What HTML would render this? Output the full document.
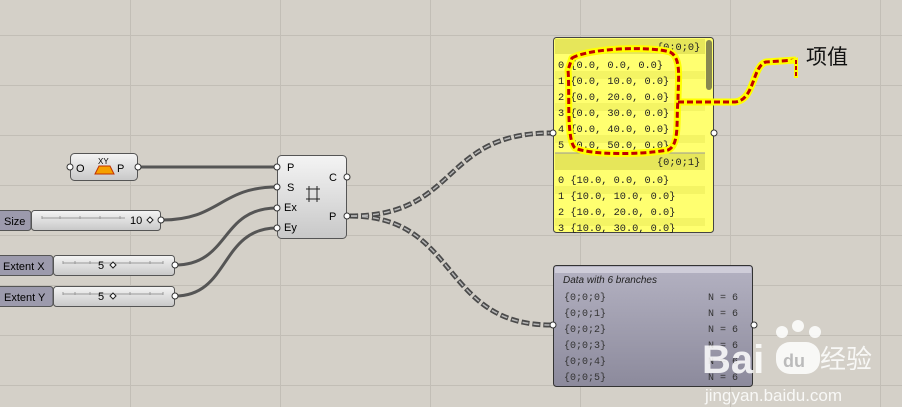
<!DOCTYPE html>
<html><head><meta charset="utf-8"><style>
body{margin:0;width:902px;height:407px;overflow:hidden;background:#d4d0c8;font-family:"Liberation Sans",sans-serif}
svg{position:absolute;left:0;top:0}
.m{font-family:"Liberation Mono",monospace}
</style></head><body>
<svg width="902" height="407" viewBox="0 0 902 407">
<defs>
<linearGradient id="gb" x1="0" y1="0" x2="0" y2="1"><stop offset="0" stop-color="#f4f4f4"/><stop offset="1" stop-color="#c8c8c8"/></linearGradient>
<linearGradient id="pu" x1="0" y1="0" x2="0" y2="1"><stop offset="0" stop-color="#b4b2c2"/><stop offset="1" stop-color="#8c8a9c"/></linearGradient>
</defs>
<g stroke="#c2beb6" stroke-width="1">
<path d="M130.5 0V407M280.5 0V407M430.5 0V407M580.5 0V407M730.5 0V407M880.5 0V407"/>
<path d="M0 35.5H902M0 85.5H902M0 135.5H902M0 185.5H902M0 235.5H902M0 285.5H902M0 335.5H902M0 385.5H902"/>
</g>
<g fill="none" stroke="#555" stroke-width="3">
<path d="M138 167H277"/>
<path d="M162 220C220 220 220 187 277 187"/>
<path d="M175 265C230 265 220 208 277 208"/>
<path d="M175 296C230 296 220 228 277 228"/>
</g>
<g fill="none" stroke="#4a4a4a" stroke-width="5" stroke-dasharray="8 3">
<path d="M350 216C460 216 440 133 551 133"/>
<path d="M350 216C460 216 440 325 551 325"/>
</g>
<g fill="none" stroke="#b8b8b8" stroke-width="1.5" stroke-dasharray="6 5" stroke-dashoffset="-1">
<path d="M350 216C460 216 440 133 551 133"/>
<path d="M350 216C460 216 440 325 551 325"/>
</g>
<rect x="70.5" y="153.5" width="67" height="27" rx="4" fill="url(#gb)" stroke="#555"/>
<text x="76" y="172" font-size="11">O</text>
<text x="117" y="172" font-size="11">P</text>
<text x="98" y="164" font-size="8">XY</text>
<path d="M95 174L99 166H110L114 174Z" fill="#f5a000" stroke="#c03000"/>
<circle cx="70" cy="167" r="3" fill="#fff" stroke="#333"/>
<circle cx="138" cy="167" r="3" fill="#fff" stroke="#333"/>
<rect x="277.5" y="155.5" width="69" height="83" rx="4" fill="url(#gb)" stroke="#555"/>
<g font-size="11"><text x="287" y="171">P</text><text x="287" y="191">S</text><text x="284" y="211">Ex</text><text x="284" y="231">Ey</text><text x="329" y="181">C</text><text x="329" y="220">P</text></g>
<path d="M306 189H320M306 199H320M309 186V202M317 186V202" stroke="#222" stroke-width="1" fill="none"/>
<g fill="#fff" stroke="#333"><circle cx="277" cy="167" r="3"/><circle cx="277" cy="187" r="3"/><circle cx="277" cy="208" r="3"/><circle cx="277" cy="228" r="3"/><circle cx="347" cy="177" r="3"/><circle cx="347" cy="216" r="3"/></g>
<g>
<rect x="-5" y="210.5" width="36" height="20" rx="3" fill="#9c9aac" stroke="#555"/>
<rect x="31.5" y="210.5" width="129" height="20" rx="3" fill="url(#gb)" stroke="#555"/>
<text x="4" y="225" font-size="11">Size</text>
<path d="M42 216V219M60 216V219M80 216V219M100 216V219M120 216V219M42 218H125" stroke="#999" fill="none"/>
<text x="130" y="224" font-size="11">10</text>
<path d="M150 217l3 3-3 3-3-3z" fill="#fff" stroke="#222"/>
<circle cx="161" cy="220" r="3" fill="#fff" stroke="#333"/>
</g>
<g>
<rect x="-5" y="255.5" width="58" height="20" rx="3" fill="#9c9aac" stroke="#555"/>
<rect x="53.5" y="255.5" width="121" height="20" rx="3" fill="url(#gb)" stroke="#555"/>
<text x="3" y="270" font-size="11">Extent X</text>
<path d="M63 261V264M75 261V264M90 261V264M130 261V264M150 261V264M163 261V264M63 263H163" stroke="#999" fill="none"/>
<text x="98" y="269" font-size="11">5</text>
<path d="M113 262l3 3-3 3-3-3z" fill="#fff" stroke="#222"/>
<circle cx="175" cy="265" r="3" fill="#fff" stroke="#333"/>
</g>
<g>
<rect x="-5" y="286.5" width="58" height="20" rx="3" fill="#9c9aac" stroke="#555"/>
<rect x="53.5" y="286.5" width="121" height="20" rx="3" fill="url(#gb)" stroke="#555"/>
<text x="4" y="301" font-size="11">Extent Y</text>
<path d="M63 292V295M75 292V295M90 292V295M130 292V295M150 292V295M163 292V295M63 294H163" stroke="#999" fill="none"/>
<text x="98" y="300" font-size="11">5</text>
<path d="M113 293l3 3-3 3-3-3z" fill="#fff" stroke="#222"/>
<circle cx="175" cy="296" r="3" fill="#fff" stroke="#333"/>
</g>
<rect x="553.5" y="37.5" width="160" height="195" rx="3" fill="#ffff70" stroke="#444"/>
<rect x="555" y="39" width="150" height="15" fill="#e6e65a"/>
<g fill="#f4f464"><rect x="555" y="71" width="150" height="8"/><rect x="555" y="103" width="150" height="8"/><rect x="555" y="135" width="150" height="8"/><rect x="555" y="186" width="150" height="8"/><rect x="555" y="218" width="150" height="8"/></g>
<rect x="555" y="153" width="150" height="17" fill="#e6e65a"/>
<path d="M555 153H705" stroke="#999"/>
<rect x="706" y="40" width="6" height="50" rx="3" fill="#888850"/>
<g class="m" font-size="10.3" fill="#222">
<text x="657" y="50">{0;0;0}</text>
<text x="558" y="68">0 {0.0, 0.0, 0.0}</text>
<text x="558" y="84">1 {0.0, 10.0, 0.0}</text>
<text x="558" y="100">2 {0.0, 20.0, 0.0}</text>
<text x="558" y="116">3 {0.0, 30.0, 0.0}</text>
<text x="558" y="132">4 {0.0, 40.0, 0.0}</text>
<text x="558" y="148">5 {0.0, 50.0, 0.0}</text>
<text x="657" y="165">{0;0;1}</text>
<text x="558" y="183">0 {10.0, 0.0, 0.0}</text>
<text x="558" y="199">1 {10.0, 10.0, 0.0}</text>
<text x="558" y="215">2 {10.0, 20.0, 0.0}</text>
<text x="558" y="231">3 {10.0, 30.0, 0.0}</text>
</g>
<circle cx="553" cy="133" r="3" fill="#fff" stroke="#333"/>
<circle cx="714" cy="133" r="3" fill="#fff" stroke="#333"/>
<path d="M572 58C590 48 650 46 670 52C682 58 678 80 678 100C676 120 680 145 668 150C640 155 590 155 575 148C566 140 570 90 568 70Z M678 102H735C755 100 752 66 766 62L796 60" fill="none" stroke="#ffff00" stroke-width="7" stroke-linejoin="round"/>
<path d="M572 58C590 48 650 46 670 52C682 58 678 80 678 100C676 120 680 145 668 150C640 155 590 155 575 148C566 140 570 90 568 70Z M678 102H735C755 100 752 66 766 62L796 60" fill="none" stroke="#c00000" stroke-width="3" stroke-dasharray="6 3"/>
<path d="M790 62l6-2 0 18" fill="none" stroke="#ffff00" stroke-width="4"/>
<path d="M796 60l0 18" fill="none" stroke="#c00000" stroke-width="2" stroke-dasharray="4 2"/>
<text x="806" y="64" font-size="21" font-family="'Liberation Sans','Noto Sans CJK SC',sans-serif" fill="#111">项值</text>
<rect x="553.5" y="265.5" width="199" height="121" rx="3" fill="url(#pu)" stroke="#333"/>
<rect x="555" y="267" width="196" height="6" fill="#cfcdd9"/>
<text x="563" y="283" font-size="10" font-style="italic" fill="#222">Data with 6 branches</text>
<g class="m" font-size="10" fill="#333">
<text x="564" y="300">{0;0;0}</text><text x="708" y="300">N = 6</text>
<text x="564" y="316">{0;0;1}</text><text x="708" y="316">N = 6</text>
<text x="564" y="332">{0;0;2}</text><text x="708" y="332">N = 6</text>
<text x="564" y="348">{0;0;3}</text><text x="708" y="348">N = 6</text>
<text x="564" y="364">{0;0;4}</text><text x="708" y="364">N = 6</text>
<text x="564" y="380">{0;0;5}</text><text x="708" y="380">N = 6</text>
</g>
<circle cx="553" cy="325" r="3" fill="#fff" stroke="#333"/>
<circle cx="754" cy="325" r="3" fill="#fff" stroke="#333"/>
<g fill="#fff" opacity="0.85">
<text x="702" y="373" font-size="40" font-weight="bold">Bai</text>
<circle cx="782" cy="332" r="6"/><circle cx="798" cy="326" r="6"/><circle cx="815" cy="332" r="6"/>
<rect x="776" y="342" width="44" height="32" rx="14"/>
<text x="820" y="368" font-size="26" font-family="'Liberation Sans','Noto Sans CJK SC',sans-serif">经验</text>
<text x="705" y="401" font-size="17">jingyan.baidu.com</text>
</g>
<text x="783" y="367" font-size="18" font-weight="bold" fill="#bbb">du</text>
</svg>
</body></html>
